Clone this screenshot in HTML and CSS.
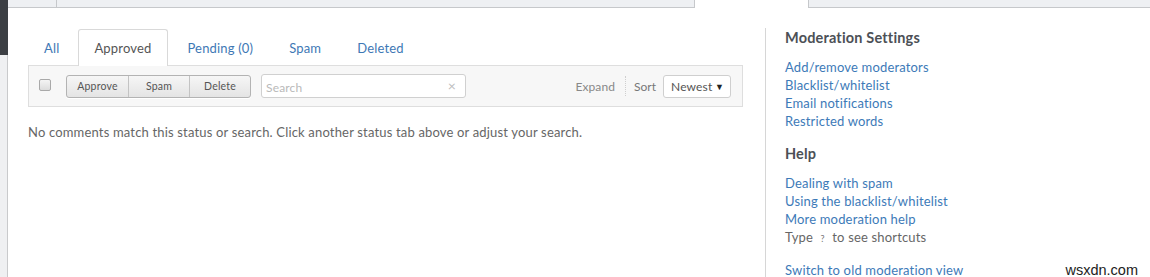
FILE: index.html
```html
<!DOCTYPE html>
<html>
<head>
<meta charset="utf-8">
<link rel="stylesheet" href="styles.css">
</head>
<body>
<div class="page">
  <div class="rail"><div class="rail-dark"></div></div>
  <div class="main">
    <div class="topstrip">
      <div class="seg seg-a"><div class="seg-small"></div></div>
      <div class="seg-gap"></div>
      <div class="seg seg-b"></div>
    </div>
    <div class="content">
      <div class="col">
        <ul class="tabs">
          <li class="tab tab-first">All</li>
          <li class="tab active">Approved</li>
          <li class="tab">Pending (0)</li>
          <li class="tab">Spam</li>
          <li class="tab">Deleted</li>
        </ul>
        <div class="toolbar">
          <span class="check"></span>
          <div class="btn-group">
            <span class="btn">Approve</span>
            <span class="btn">Spam</span>
            <span class="btn">Delete</span>
          </div>
          <div class="search"><span class="ph">Search</span><span class="x">×</span></div>
          <div class="spacer"></div>
          <span class="expand">Expand</span>
          <span class="sep"></span>
          <span class="sort">Sort</span>
          <div class="select"><span>Newest</span><span class="caret">▼</span></div>
        </div>
        <p class="empty">No comments match this status or search. Click another status tab above or adjust your search.</p>
      </div>
      <aside class="side">
        <h3>Moderation Settings</h3>
        <ul class="links">
          <li><a>Add/remove moderators</a></li>
          <li><a>Blacklist/whitelist</a></li>
          <li><a>Email notifications</a></li>
          <li><a>Restricted words</a></li>
        </ul>
        <h3 class="help">Help</h3>
        <ul class="links links-help">
          <li><a>Dealing with spam</a></li>
          <li><a>Using the blacklist/whitelist</a></li>
          <li><a>More moderation help</a></li>
          <li class="plain">Type <kbd>?</kbd> to see shortcuts</li>
        </ul>
        <p class="switch"><a>Switch to old moderation view</a></p>
      </aside>
      <div class="watermark">wsxdn.com</div>
    </div>
  </div>
</div>
</body>
</html>
```

FILE: styles.css
```css
* { box-sizing: border-box; }
html, body { margin: 0; padding: 0; background: #fff; }
body {
  font-family: Lato, "Liberation Sans", sans-serif;
  font-size: 13px;
  letter-spacing: 0.17px;
  color: #666;
  width: 1150px;
  height: 277px;
  overflow: hidden;
}
.page { display: flex; height: 277px; }
.rail {
  width: 8px;
  flex: none;
  background: #eff0f2;
  border-right: 1px solid #c9cacc;
}
.rail-dark { height: 55px; background: #3c3f44; margin-right: -1px; }
.main { flex: 1; display: flex; flex-direction: column; }
.topstrip { display: flex; height: 8px; }
.seg {
  background: #eef0f3;
  border-bottom: 1px solid #c6c8cb;
  height: 8px;
}
.seg-a { width: 687px; border-right: 1px solid #c6c8cb; display: flex; }
.seg-small { width: 49px; border-right: 1px solid #c6c8cb; }
.seg-gap { width: 113px; }
.seg-b { flex: 1; border-left: 1px solid #c6c8cb; }
.content { display: flex; padding-left: 20px; position: relative; flex: 1; }
.col { width: 715px; flex: none; padding-top: 21px; }
.tabs {
  list-style: none; margin: 0; padding: 0;
  display: flex; height: 36px;
}
.tab {
  padding: 0 16px 0 15px;
  margin-right: 3px;
  line-height: 36px;
  font-size: 13px;
  color: #3e78b5;
  border: 1px solid transparent;
  border-bottom: none;
  border-radius: 3px 3px 0 0;
}
.tab-first { margin-right: 2px; }
.tab.active {
  color: #555;
  border-color: #d9d9d9;
  background: #fff;
  position: relative;
  z-index: 1;
  height: 37px;
}
.toolbar {
  height: 42px;
  background: #f7f7f7;
  border: 1px solid #dedede;
  display: flex;
  align-items: center;
  padding: 0 11px 0 10px;
}
.check {
  width: 12px; height: 12px;
  border: 1px solid #a9a9a9;
  border-radius: 2px;
  background: linear-gradient(#f4f4f4, #dcdcdc);
  margin-top: -3px;
}
.btn-group {
  display: flex;
  margin-left: 15px;
  border: 1px solid #b3b3b3;
  border-radius: 3px;
  height: 23px;
  background: linear-gradient(#f6f6f6, #e4e4e4);
  box-shadow: 0 1px 0 #fff;
}
.btn {
  width: 61px;
  text-align: center;
  font-size: 10.5px;
  line-height: 21px;
  color: #555;
  letter-spacing: 0.2px;
}
.btn + .btn { border-left: 1px solid #c3c3c3; }
.search {
  margin-left: 10px;
  width: 205px; height: 24px;
  border: 1px solid #d0d0d0;
  border-radius: 3px;
  background: #fff;
  display: flex; align-items: center;
  justify-content: space-between;
  padding: 2px 9px 0 4px;
}
.ph { color: #b9b9b9; font-size: 12px; }
.x { color: #bdbdbd; font-size: 14px; margin-top: -4px; }
.spacer { flex: 1; }
.expand { color: #888; font-size: 12px; letter-spacing: 0.1px; }
.sep {
  width: 0; height: 20px;
  border-left: 1px dotted #cfcfcf;
  margin: 0 8px 0 10px;
}
.sort { color: #777; font-size: 12px; letter-spacing: 0; }
.select {
  margin-left: 7px;
  width: 68px; height: 23px;
  border: 1px solid #cfcfcf;
  border-radius: 3px;
  background: #fff;
  display: flex; align-items: center; justify-content: space-between;
  padding: 0 6px 0 7px;
  font-size: 12px; color: #555;
}
.caret { font-size: 9px; color: #222; }
.empty { margin: 17px 0 0; font-size: 13px; color: #666; }
.side {
  margin-left: 22px;
  margin-top: 20px;
  border-left: 1px solid #d6d6d6;
  padding-left: 19px;
  padding-top: 0;
}
.side h3 {
  margin: 0;
  font-size: 14.5px;
  font-weight: 700;
  color: #4c5056;
  line-height: 20px;
}
.side h3.help { margin-top: 14px; }
.links { list-style: none; margin: 10px 0 0; padding: 0; }
.links-help { margin-top: 10px; }
.links li { line-height: 18px; font-size: 13px; }
.links a, .switch a { color: #3d7ab8; }
.links .plain { color: #666; }
kbd {
  font-family: inherit;
  font-size: 9px;
  color: #777;
  padding: 0 4px;
}
.switch { margin: 13px 0 0; font-size: 13px; line-height: 18px; }
.watermark {
  position: absolute;
  right: 12px;
  bottom: 1px;
  font-size: 14.5px;
  letter-spacing: 0;
  color: #222;
  font-family: "Liberation Sans", sans-serif;
}
```
